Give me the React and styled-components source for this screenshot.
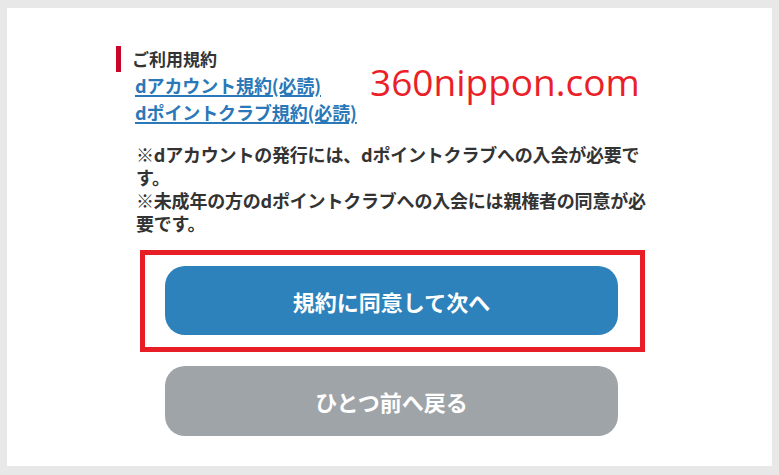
import styled, { createGlobalStyle } from "styled-components";

const GlobalStyle = createGlobalStyle`
  html, body {
    margin: 0;
    padding: 0;
    background: #e8e8e8;
  }
  body {
    font-family: "Noto Sans CJK JP", "Noto Sans", sans-serif;
    color: #333;
  }
`;

const Panel = styled.main`
  position: relative;
  box-sizing: border-box;
  margin: 8px 7px;
  height: 458px;
  padding-top: 38px;
  background: #fff;
`;

const Terms = styled.section`
  padding-left: 109px;
`;

const Heading = styled.h2`
  margin: 0;
  padding-left: 11px;
  border-left: 5px solid #c9072a;
  font-size: 17px;
  font-weight: 700;
  line-height: 26px;
  color: #333;
`;

const LinkList = styled.ul`
  list-style: none;
  margin: 0 0 0 19px;
  padding: 0;
`;

const TermLink = styled.a`
  display: inline-block;
  font-size: 18px;
  font-weight: 700;
  line-height: 27px;
  letter-spacing: -0.1px;
  color: #2a78b8;
  text-decoration: underline;
  text-decoration-thickness: 1.5px;
  text-underline-offset: 2px;
`;

const Notes = styled.p`
  margin: 17px 0 0 20px;
  font-size: 18px;
  font-weight: 700;
  line-height: 23px;
  letter-spacing: -0.2px;
  white-space: nowrap;
  color: #333;
`;

const Actions = styled.div`
  display: flex;
  flex-direction: column;
  margin-top: 15px;
`;

const Highlight = styled.div`
  box-sizing: border-box;
  width: 505px;
  height: 102px;
  margin-left: 133px;
  padding: 11px 22px 12px 20px;
  border: 5px solid #e81e26;
`;

const Button = styled.button`
  display: flex;
  align-items: center;
  justify-content: center;
  box-sizing: border-box;
  width: ${(p) => (p.$full ? "100%" : "453px")};
  height: ${(p) => (p.$full ? "100%" : "70px")};
  margin: 0;
  padding: 0;
  border: none;
  border-radius: 20px;
  background: ${(p) => p.$bg};
  color: #fff;
  font-family: "Noto Sans CJK JP", "Noto Sans", sans-serif;
  font-size: 22px;
  font-weight: 700;
  cursor: pointer;
`;

const BackRow = styled.div`
  margin: 14px 0 0 158px;
`;

const Watermark = styled.span`
  position: absolute;
  left: 363px;
  top: 55px;
  font-family: "Open Sans", sans-serif;
  font-size: 37px;
  line-height: 37px;
  color: #ea1f28;
  white-space: nowrap;
`;

const App = () => {
  return (
    <>
      <GlobalStyle />
      <Panel>
        <Terms>
          <Heading>ご利用規約</Heading>
          <LinkList>
            <li>
              <TermLink href="#">dアカウント規約(必読)</TermLink>
            </li>
            <li>
              <TermLink href="#">dポイントクラブ規約(必読)</TermLink>
            </li>
          </LinkList>
          <Notes>
            ※dアカウントの発行には、dポイントクラブへの入会が必要で
            <br />
            す。
            <br />
            ※未成年の方のdポイントクラブへの入会には親権者の同意が必
            <br />
            要です。
          </Notes>
        </Terms>

        <Actions>
          <Highlight>
            <Button $full $bg="#2d82bb">規約に同意して次へ</Button>
          </Highlight>
          <BackRow>
            <Button $bg="#9fa4a8">ひとつ前へ戻る</Button>
          </BackRow>
        </Actions>

        <Watermark>360nippon.com</Watermark>
      </Panel>
    </>
  );
};

export default App;
